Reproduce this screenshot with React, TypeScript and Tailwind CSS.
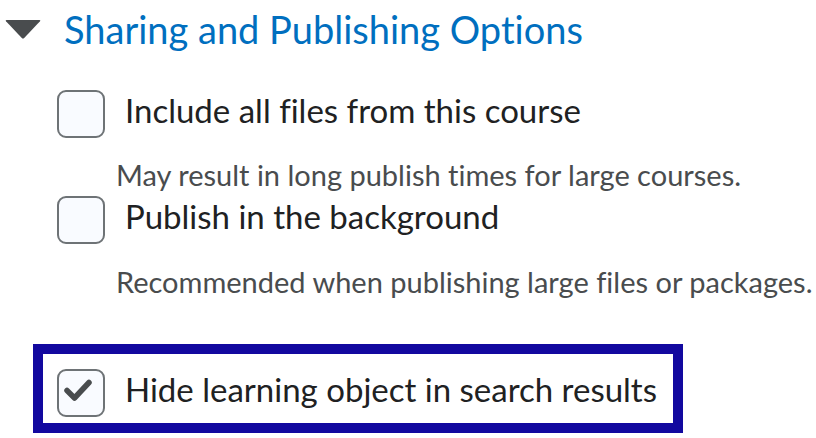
const LABEL = "text-[33px] leading-[38px] text-[#202122]";
const HINT = "text-[29px] leading-[1.2] text-[#494c4e]";

function Box({ checked = false }: { checked?: boolean }) {
  return (
    <span className="flex h-[48px] w-[48px] shrink-0 items-center justify-center rounded-[9px] border-2 border-[#6e7376] bg-[#f9fbff]">
      {checked && (
        <svg width="48" height="48" viewBox="0 0 48 48" fill="none" className="shrink-0">
          <path
            d="M12 23.5 L19.5 31 L34 15.5"
            stroke="#494c4e"
            strokeWidth="5.5"
            strokeLinecap="round"
            strokeLinejoin="round"
            transform="translate(-2 -2)"
          />
        </svg>
      )}
    </span>
  );
}

function Option({ label, checked }: { label: string; checked?: boolean }) {
  return (
    <label className="flex items-start">
      <Box checked={checked} />
      <span className={`ml-[20px] mt-[1px] whitespace-nowrap ${LABEL}`}>{label}</span>
    </label>
  );
}

export default function App() {
  return (
    <main className="h-[438px] w-[816px] overflow-hidden bg-white font-['Lato','Noto_Sans',sans-serif] [font-variant-ligatures:none]">
      {/* Section header */}
      <div className="flex items-center pl-[5px] pt-[7px]">
        <svg width="36" height="19" viewBox="0 0 36 19" className="shrink-0">
          <path d="M1.5 0 H34.5 Q36 0 35 1.3 L19.2 18 Q18 19.2 16.8 18 L1 1.3 Q0 0 1.5 0 Z" fill="#494c4e" />
        </svg>
        <h2 className="ml-[23px] whitespace-nowrap text-[38px] leading-[1.2] text-[#006fbf]">
          Sharing and Publishing Options
        </h2>
      </div>

      <div className="pl-[57px]">
        <div className="mt-[37px]">
          <Option label="Include all files from this course" />
        </div>
        <p className={`mt-[20px] whitespace-nowrap pl-[59px] ${HINT}`}>
          May result in long publish times for large courses.
        </p>
        <div className="mt-[4px]">
          <Option label="Publish in the background" />
        </div>
        <p className={`mt-[21px] whitespace-nowrap pl-[59px] ${HINT}`}>
          Recommended when publishing large files or packages.
        </p>
      </div>

      <div className="ml-[33px] mt-[44px] w-[650px] border-[10px] border-[#12089f] pb-[6px] pl-[14px] pt-[15px]">
        <Option label="Hide learning object in search results" checked />
      </div>
    </main>
  );
}
